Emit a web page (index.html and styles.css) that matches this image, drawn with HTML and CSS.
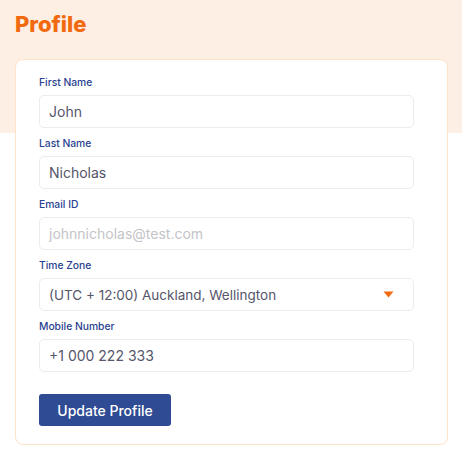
FILE: index.html
```html
<!DOCTYPE html>
<html>
<head>
<meta charset="utf-8">
<link rel="stylesheet" href="styles.css">
</head>
<body>
<div class="page">
  <div class="hero">
    <h1 class="title">Profile</h1>
  </div>
  <div class="card">
    <form class="form">
      <div class="field">
        <label class="label">First Name</label>
        <div class="input">John</div>
      </div>
      <div class="field">
        <label class="label">Last Name</label>
        <div class="input">Nicholas</div>
      </div>
      <div class="field">
        <label class="label">Email ID</label>
        <div class="input placeholder">johnnicholas@test.com</div>
      </div>
      <div class="field">
        <label class="label">Time Zone</label>
        <div class="input select">
          <span class="select-text">(UTC + 12:00) Auckland, Wellington</span>
          <svg class="caret" width="11" height="7" viewBox="0 0 11 7"><path d="M0.5 0.5h10L5.5 6.5z" fill="#f26a0f"/></svg>
        </div>
      </div>
      <div class="field">
        <label class="label">Mobile Number</label>
        <div class="input">+1 000 222 333</div>
      </div>
      <div class="actions">
        <button type="button" class="btn">Update Profile</button>
      </div>
    </form>
  </div>
</div>
</body>
</html>
```

FILE: styles.css
```css
* { box-sizing: border-box; }
html, body { margin: 0; padding: 0; }
body {
  font-family: Inter, "Noto Sans", sans-serif;
  background: #fff;
  width: 462px;
  height: 457px;
  overflow: hidden;
}
.page {
  background: linear-gradient(#fdefe3 0, #fdefe3 133px, #fff 133px);
  height: 457px;
  padding: 0 15px;
}
.hero { padding: 10px 0 0 0; height: 59px; }
.title {
  margin: 0;
  font-size: 22px;
  font-weight: 800;
  color: #f26a0f;
  line-height: 28px;
}
.card {
  background: #fff;
  border: 1px solid #fde3c9;
  border-radius: 8px;
  width: 433px;
  height: 386px;
  padding: 15px 33px 0 23px;
}
.form { display: flex; flex-direction: column; }
.field { display: flex; flex-direction: column; margin-bottom: 8px; }
.label {
  font-size: 10.3px;
  font-weight: 500;
  color: #2a3f8f;
  line-height: 14px;
  margin-bottom: 6px;
}
.input {
  height: 33px;
  border: 1px solid #ececec;
  border-radius: 5px;
  padding: 0 9px;
  display: flex;
  align-items: center;
  font-size: 14px;
  color: #55566a;
}
.placeholder { color: #c4c4c8; }
.select { justify-content: space-between; padding-right: 19px; }
.select-text { font-size: 13.5px; }
.caret { display: block; }
.actions { margin-top: 14px; }
.btn {
  background: #2f4b94;
  color: #fff;
  border: none;
  border-radius: 3px;
  width: 132px;
  height: 32px;
  font-family: inherit;
  font-size: 14px;
  font-weight: 500;
  padding: 0;
}
```
